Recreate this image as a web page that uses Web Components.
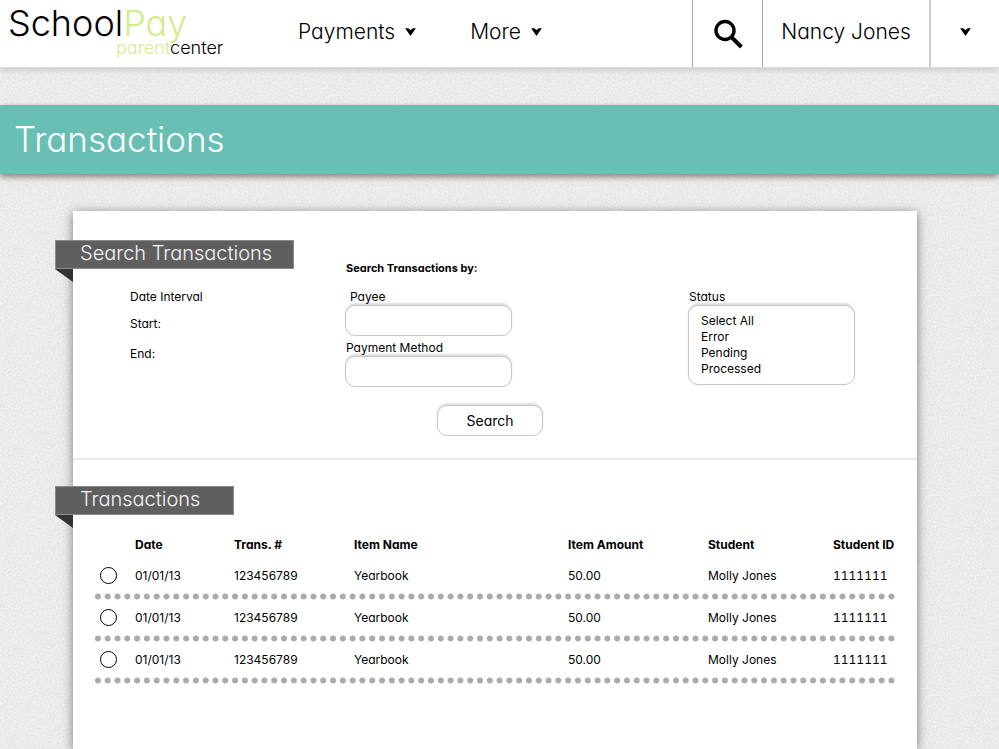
<!DOCTYPE html>
<html lang="en">
<head>
<meta charset="utf-8">
<meta name="viewport" content="width=device-width, initial-scale=1">
<title>SchoolPay parentcenter</title>
<style>
  body {
    margin: 0;
    min-height: 100vh;
    display: flex;
    flex-direction: column;
    font: 400 12px/16px Inter, "Liberation Sans", sans-serif;
    font-feature-settings: "cv11";
    color: #000;
    background-color: #f2f2f2;
    background-image: url("data:image/svg+xml,%3Csvg xmlns='http://www.w3.org/2000/svg' width='200' height='200'%3E%3Cfilter id='n' x='0' y='0' width='100%25' height='100%25'%3E%3CfeTurbulence type='fractalNoise' baseFrequency='.6' numOctaves='2' stitchTiles='stitch'/%3E%3CfeColorMatrix values='0 0 0 0 0 0 0 0 0 0 0 0 0 0 0 .12 0 0 0 -.03'/%3E%3C/filter%3E%3Crect width='200' height='200' filter='url(%23n)'/%3E%3C/svg%3E");
  }
  .panel-grid {
    display: grid;
    grid-template-columns: 273fr 343fr 228fr;
  }
  .dates, .fields, .status { display: flex; flex-direction: column; }
  .dates p { margin: 0 0 0 57px; }
  .dates p:nth-of-type(1) { margin-top: 20px; }
  .dates p:nth-of-type(2) { margin-top: 11px; }
  .dates p:nth-of-type(3) { margin-top: 14px; }
  .fields { padding-top: 20px; align-items: flex-start; }
  .fields h3 { margin: 0 0 13px; font-size: 11px; font-weight: 700; white-space: nowrap; }
  .fields text-field + text-field { margin-top: 4px; }
  .fields pill-button { margin: 18px 0 0 91px; }
  .status { padding-top: 49px; align-items: flex-start; }
</style>
</head>
<body>
<app-header></app-header>
<page-title>Transactions</page-title>
<content-panel>
  <panel-section>
    <div class="panel-grid">
      <div class="dates">
        <ribbon-title style="--ribbon-width: 239px">Search Transactions</ribbon-title>
        <p>Date Interval</p>
        <p>Start:</p>
        <p>End:</p>
      </div>
      <div class="fields">
        <h3>Search Transactions by:</h3>
        <text-field label="Payee" style="--label-indent: 4px"></text-field>
        <text-field label="Payment Method"></text-field>
        <pill-button>Search</pill-button>
      </div>
      <div class="status">
        <choice-list label="Status" options="Select All,Error,Pending,Processed"></choice-list>
      </div>
    </div>
  </panel-section>
  <panel-section>
    <ribbon-title style="--ribbon-width: 179px">Transactions</ribbon-title>
    <transactions-table></transactions-table>
  </panel-section>
</content-panel>

<script>
  class BaseElement extends HTMLElement {
    connectedCallback() {
      if (this.shadowRoot) return;
      this.attachShadow({ mode: "open" }).innerHTML =
        "<style>:host,*{box-sizing:border-box}button,input,select{font:inherit;font-feature-settings:inherit;color:inherit}</style>" + this.view();
    }
  }

  customElements.define("caret-icon", class extends BaseElement {
    view() {
      return `<style>:host{display:block;width:11px;height:8px}svg{display:block}</style>
        <svg width="11" height="8" viewBox="0 0 12 9" aria-hidden="true"><path d="M0 .4 3.4 .4 6 2.2 8.6 .4 12 .4 6 9Z"/></svg>`;
    }
  });

  customElements.define("brand-logo", class extends BaseElement {
    view() {
      return `<style>
          :host{display:block;--lime:#d3ec90}
          a{display:flex;width:fit-content;flex-direction:column;color:#000;text-decoration:none}
          .name{font-size:36px;font-weight:300;line-height:34px}
          .sub{font-size:18px;font-weight:300;line-height:16px;padding-left:108px}
          .lime{color:var(--lime)}
        </style>
        <a href="#"><span class="name">School<span class="lime">Pay</span></span>
        <span class="sub"><span class="lime">parent</span>center</span></a>`;
    }
  });

  customElements.define("app-header", class extends BaseElement {
    view() {
      return `<style>
          :host{display:flex;height:68px;background:#fff;border-bottom:1px solid #dcdcdc;
            box-shadow:0 2px 6px rgba(0,0,0,.14);font-size:21px;font-weight:300;line-height:64px}
          brand-logo{padding:6px 0 0 8px;flex:none;width:298px}
          nav{display:flex;gap:54px;flex:1}
          button{display:flex;align-items:center;gap:10px;border:0;background:none;padding:0 0 3px;cursor:pointer}
          .cell{border-left:1px solid #aaa;display:flex;justify-content:center;flex:none}
          .find{width:70px}
          .find button,.more button{width:100%;justify-content:center;padding-bottom:0}
          .user{width:167px}
          .user a{color:inherit;text-decoration:none}
          .more{width:70px;border-left:2px solid #ccc}
          .more button{padding-bottom:4px}
          svg{display:block}
        </style>
        <brand-logo></brand-logo>
        <nav>
          <button type="button">Payments<caret-icon></caret-icon></button>
          <button type="button">More<caret-icon></caret-icon></button>
        </nav>
        <div class="cell find"><button type="button" aria-label="Search">
          <svg width="30" height="30" viewBox="0 0 30 30" fill="none" stroke="#000"><circle cx="12" cy="11.5" r="9" stroke-width="3.4"/><path d="M18.2 17.8 28.4 28" stroke-width="4"/></svg>
        </button></div>
        <div class="cell user"><a href="#">Nancy Jones</a></div>
        <div class="cell more"><button type="button" aria-label="Account menu"><caret-icon></caret-icon></button></div>`;
    }
  });

  customElements.define("page-title", class extends BaseElement {
    view() {
      return `<style>
          :host{display:block;margin:37px 0;background:#69bfb4;box-shadow:0 3px 6px rgba(40,30,20,.5)}
          h1{margin:0;padding:0 14px;font-size:35px;font-weight:300;line-height:69px;color:#fff}
        </style><h1><slot></slot></h1>`;
    }
  });

  customElements.define("content-panel", class extends BaseElement {
    view() {
      return `<style>
          :host{display:block;flex:1;margin:0 82px 0 73px;background:#fff;box-shadow:0 2px 10px rgba(50,45,35,.6)}
        </style><slot></slot>`;
    }
  });

  customElements.define("panel-section", class extends BaseElement {
    view() {
      return `<style>
          :host{display:block;padding:29px 0 22px}
          :host(:not(:first-child)){border-top:2px solid #e8e8e8;padding-top:26px}
        </style><slot></slot>`;
    }
  });

  customElements.define("ribbon-title", class extends BaseElement {
    view() {
      return `<style>
          :host{display:block;position:relative;width:var(--ribbon-width);height:29px;margin-left:-18px;
            background:#5f5f5f;border:1px solid #8a8a8a}
          :host::after{content:"";position:absolute;left:-1px;top:28px;width:18px;height:13px;background:#333;
            clip-path:polygon(0 0,100% 0,100% 100%)}
          h2{margin:0;padding-left:24px;font-size:20px;font-weight:300;line-height:24px;color:#f4f4f4;white-space:nowrap}
        </style><h2><slot></slot></h2>`;
    }
  });

  const boxStyle = `border:1px solid #c6c6c6;border-radius:10px;background:#fff;box-shadow:0 -2px 2px rgba(0,0,0,.13);outline:0;`;

  customElements.define("text-field", class extends BaseElement {
    view() {
      return `<style>
          :host{display:flex;flex-direction:column}
          label{padding-left:var(--label-indent,0)}
          input{width:167px;height:31px;margin:0 0 0 -1px;padding:0 11px;${boxStyle}}
        </style><label for="field">${this.getAttribute("label")}</label><input id="field" type="text">`;
    }
  });

  customElements.define("choice-list", class extends BaseElement {
    view() {
      const options = this.getAttribute("options").split(",").map(o => `<option>${o}</option>`).join("");
      return `<style>
          :host{display:flex;flex-direction:column}
          select{appearance:none;width:167px;height:80px;margin:0 0 0 -1px;padding:7px 12px;overflow:hidden;${boxStyle}}
          option{padding:0;min-height:16px;line-height:16px;font-feature-settings:"cv11"}
        </style><label for="list">${this.getAttribute("label")}</label><select id="list" multiple size="4">${options}</select>`;
    }
  });

  customElements.define("pill-button", class extends BaseElement {
    view() {
      return `<style>
          :host{display:block}
          button{display:block;width:106px;height:31px;padding:0;font-size:14px;cursor:pointer;${boxStyle}}
        </style><button type="button"><slot></slot></button>`;
    }
  });

  customElements.define("transactions-table", class extends BaseElement {
    view() {
      const rows = Array(3).fill(["01/01/13", "123456789", "Yearbook", "50.00", "Molly Jones", "1111111"]);
      const widths = [42, 99, 120, 214, 140, 125, 64];
      const heads = ["", "Date", "Trans. #", "Item Name", "Item Amount", "Student", "Student ID"];
      const line = (r, i) => `<tr><td><input type="radio" name="row" id="r${i}"></td>` +
        r.map((c, k) => `<td>${k ? c : `<label for="r${i}">${c}</label>`}</td>`).join("") + "</tr>";
      return `<style>
          :host{display:block;padding:22px 20px 0}
          table{width:100%;table-layout:fixed;border-collapse:collapse;white-space:nowrap}
          th,td{padding:0;text-align:left}
          th{padding-bottom:5px;font-weight:700}
          td{height:42px;padding-bottom:6px;vertical-align:middle}
          td:first-child{padding-bottom:8px}
          td:last-child{font-feature-settings:"cv11","tnum"}
          tbody tr{background:radial-gradient(circle,#aaa 2.6px,transparent 3.4px) left bottom/calc(100%/82) 7px repeat-x}
          input{appearance:none;display:block;width:17px;height:17px;margin:0 0 0 7px;border:1px solid #000;border-radius:50%;background:#fff}
          input:checked{box-shadow:inset 0 0 0 4px #fff;background:#000}
        </style>
        <table>
          <colgroup>${widths.map(w => `<col style="width:${w}px">`).join("")}</colgroup>
          <thead><tr>${heads.map(h => h ? `<th scope="col">${h}</th>` : "<td style='height:auto'></td>").join("")}</tr></thead>
          <tbody>${rows.map(line).join("")}</tbody>
        </table>`;
    }
  });
</script>
</body>
</html>
